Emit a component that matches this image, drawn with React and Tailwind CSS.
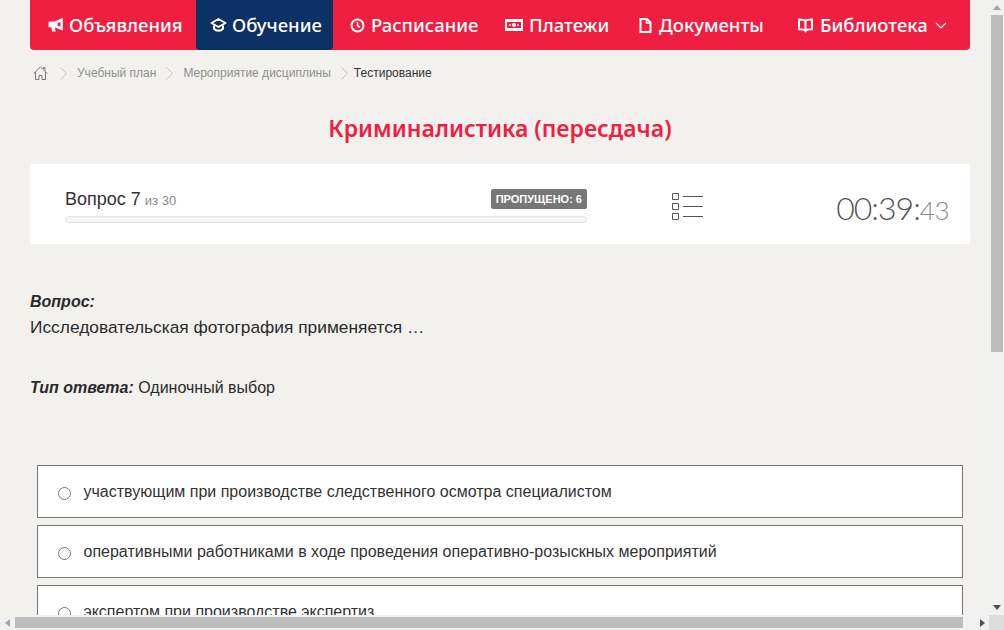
import React from 'react';

const nav = [
  { label: 'Объявления', icon: 'bullhorn', width: 'w-[166px]', pad: 'pl-[18px]', gap: 'gap-[5px]' },
  { label: 'Обучение', icon: 'cap', active: true, width: 'w-[137px]', pad: 'pl-[14px]', gap: 'gap-[5px]' },
  { label: 'Расписание', icon: 'clock', width: 'w-[156px]', pad: 'pl-[17px]', gap: 'gap-[6px]' },
  { label: 'Платежи', icon: 'money', width: 'w-[132px]', pad: 'pl-[16px]', gap: 'gap-[6px]' },
  { label: 'Документы', icon: 'file', width: 'w-[159px]', pad: 'pl-[18px]', gap: 'gap-[7px]' },
  { label: 'Библиотека', icon: 'book', caret: true, width: 'w-[190px]', pad: 'pl-[18px]', gap: 'gap-[7px]' },
];

const answers = [
  'участвующим при производстве следственного осмотра специалистом',
  'оперативными работниками в ходе проведения оперативно-розыскных мероприятий',
  'экспертом при производстве экспертиз',
];

function NavIcon({ name }) {
  if (name === 'bullhorn') return (
    <svg width="16" height="16" viewBox="0 0 16 16" fill="white">
      <path d="M.5 4.500h6L14.800 1v12.500L6.800 10.500l.9 4H4.200l-.9-4.200H.5z" />
      <path d="M12.500 5 9.500 6.200v2.400l3 1.200z" fill="#f01f42" />
    </svg>
  );
  if (name === 'cap') return (
    <svg width="17" height="16" viewBox="0 0 17 16" fill="none" stroke="white" strokeWidth="2">
      <path d="M8.500 2 15.500 6 8.500 10 1.500 6z" strokeLinejoin="round" />
      <path d="M4 8.500v3.200c1 1.400 2.800 2.100 4.500 2.100s3.500-.7 4.500-2.100V8.500" />
    </svg>
  );
  if (name === 'clock') return (
    <svg width="15" height="15" viewBox="0 0 15 15" fill="none" stroke="white" strokeWidth="2">
      <circle cx="7.500" cy="7.500" r="6" />
      <path d="M7.500 4v3.800l2.500 1.400" strokeWidth="1.600" />
    </svg>
  );
  if (name === 'money') return (
    <svg width="18" height="12" viewBox="0 0 18 12" fill="white">
      <path fillRule="evenodd" d="M0 0h18v12H0zM2 3v6h14V3z" />
      <circle cx="9" cy="6" r="2" />
      <circle cx="5" cy="6" r="1" />
      <circle cx="13" cy="6" r="1" />
    </svg>
  );
  if (name === 'file') return (
    <svg width="13" height="15" viewBox="0 0 13 15" fill="none" stroke="white" strokeWidth="2">
      <path d="M1.500 1h6.500l3.500 3.500V14h-10z" />
      <path d="M7.500 1v4h4" strokeWidth="1.500" />
    </svg>
  );
  return (
    <svg width="15" height="15" viewBox="0 0 15 15" fill="none" stroke="white" strokeWidth="2">
      <path d="M7.500 3C6.500 1.800 3.500 1.500 1 1.500v9.700c2.500 0 5.500.3 6.500 1.800 1-1.500 4-1.800 6.500-1.800V1.500C11.500 1.500 8.500 1.800 7.500 3zM7.500 3v10" />
    </svg>
  );
}

function Chevron({ className }) {
  return (
    <svg className={className} width="7" height="13" viewBox="0 0 7 13" fill="none" stroke="#c4c4c4" strokeWidth="1">
      <path d="M.5.500 6.500 6.500.5 12.500" />
    </svg>
  );
}

function Nav() {
  return (
    <nav className="flex h-[50px] w-[940px] rounded-b-[4px] bg-[#f01f42] font-['Noto_Sans',sans-serif] text-[18.500px] font-medium text-white">
      {nav.map((item) => (
        <a key={item.label} className={`flex items-center rounded-b-[4px] ${item.gap} ${item.width} ${item.pad} ${item.active ? 'bg-[#0b3165]' : ''}`}>
          <NavIcon name={item.icon} />
          <span>{item.label}</span>
          {item.caret && (
            <svg width="12" height="7" viewBox="0 0 12 7" fill="none" stroke="white" strokeWidth="1.200">
              <path d="M1 1l5 5 5-5" />
            </svg>
          )}
        </a>
      ))}
    </nav>
  );
}

function Breadcrumbs() {
  return (
    <div className="mt-[14px] flex h-[18px] items-center pl-[3px] text-[12px] text-[#8f8f8f]">
      <svg width="15" height="15" viewBox="0 0 15 15" fill="none" stroke="#777" strokeWidth="1">
        <path d="M.7 7.500 7.500 1l6.800 6.500M2.500 6v7.500h3.500V9.500h3v4h3.500V6M10.500 3V1.500h1.500v3" />
      </svg>
      <Chevron className="ml-[12px]" />
      <span className="ml-[10px]">Учебный план</span>
      <Chevron className="ml-[10px]" />
      <span className="ml-[10px]">Мероприятие дисциплины</span>
      <Chevron className="ml-[10px]" />
      <span className="ml-[6px] text-[#333]">Тестирование</span>
    </div>
  );
}

function ProgressCard() {
  return (
    <div className="flex h-[80px] w-[940px] bg-white pl-[35px]">
      <div className="w-[522px] pt-[25px]">
        <div className="flex h-[20px] items-center justify-between">
          <div className="text-[18px] text-[#333]">
            Вопрос 7 <span className="-ml-[1px] text-[13px] text-[#8a8a8a]">из 30</span>
          </div>
          <span className="flex h-[20px] items-center rounded-[2px] bg-[#777] px-[5px] text-[11px] font-bold text-white">ПРОПУЩЕНО: 6</span>
        </div>
        <div className="mt-[7px] h-[7px] rounded-full border border-[#e2e2e2] bg-[#f5f5f5]" />
      </div>
      <svg className="mt-[29px] ml-[85px]" width="31" height="27" viewBox="0 0 31 27" fill="none" stroke="#555" strokeWidth="1">
        <path d="M.5.500h6v6h-6zM.5 10.500h6v6h-6zM.5 20.500h6v6h-6z" />
        <path d="M11 3.500h20M11 13.500h20M11 23.500h20" />
      </svg>
      <div className="mr-[21px] ml-auto pt-[21px] font-['Lato',sans-serif] text-[32px] leading-[46px] font-light tracking-[-1px] text-[#555]">
        00:39:<span className="text-[26px] tracking-[-0.5px] text-[#8a8a8a]">43</span>
      </div>
    </div>
  );
}

function Answer({ text }) {
  return (
    <label className="flex h-[53px] w-[926px] items-center border border-[#777] bg-white pl-[20px] text-[16px] text-[#333]">
      <span className="mt-[3px] h-[13px] w-[13px] shrink-0 rounded-full border border-[#767676] bg-white" />
      <span className="ml-[12.500px]">{text}</span>
    </label>
  );
}

function Scrollbars({ children }) {
  return (
    <div className="flex h-[630px] w-[1004px] flex-col overflow-hidden bg-[#f2f1ee]">
      <div className="flex min-h-0 flex-1">
        <div className="min-w-0 flex-1 overflow-hidden">{children}</div>
        <div className="flex w-[15px] flex-col items-center bg-[#f1f1f1]">
          <div className="flex h-[15px] items-center text-[0px]">
            <span className="border-x-[4px] border-b-[5px] border-x-transparent border-b-[#a3a3a3]" />
          </div>
          <div className="h-[337px] w-[12px] bg-[#bdbdbd]" />
          <div className="mt-auto flex h-[15px] items-center">
            <span className="border-x-[4px] border-t-[5px] border-x-transparent border-t-[#505050]" />
          </div>
        </div>
      </div>
      <div className="flex h-[15px] bg-[#f1f1f1]">
        <div className="flex w-[15px] items-center justify-center">
          <span className="border-y-[4px] border-r-[5px] border-y-transparent border-r-[#a3a3a3]" />
        </div>
        <div className="my-[2px] w-[948px] bg-[#bdbdbd]" />
        <div className="ml-auto flex w-[26px] items-center justify-end pr-[4px]">
          <span className="border-y-[4px] border-l-[5px] border-y-transparent border-l-[#505050]" />
        </div>
        <div className="w-[15px] bg-[#dcdcdc]" />
      </div>
    </div>
  );
}

export default function App() {
  return (
    <Scrollbars>
      <div className="w-[989px] pl-[30px] font-['Liberation_Sans',Arial,sans-serif]">
        <Nav />
        <Breadcrumbs />
        <h1 className="mt-[31px] w-[940px] text-center font-['Noto_Sans',sans-serif] text-[23px] leading-[30px] font-semibold text-[#f01f42]">
          Криминалистика (пересдача)
        </h1>
        <div className="mt-[21px]">
          <ProgressCard />
        </div>
        <div className="mt-[45px] text-[16px] leading-[26px] text-[#2b2b2b]">
          <div className="font-bold italic">Вопрос:</div>
          <div className="h-[25px] text-[17.330px] leading-[25px]">Исследовательская фотография применяется …</div>
        </div>
        <div className="mt-[35px] text-[16px] leading-[26px] text-[#2b2b2b]">
          <b className="italic">Тип ответа:</b> Одиночный выбор
        </div>
        <div className="mt-[64px] ml-[7px] flex flex-col gap-[7px]">
          {answers.map((a) => (
            <Answer key={a} text={a} />
          ))}
        </div>
      </div>
    </Scrollbars>
  );
}
